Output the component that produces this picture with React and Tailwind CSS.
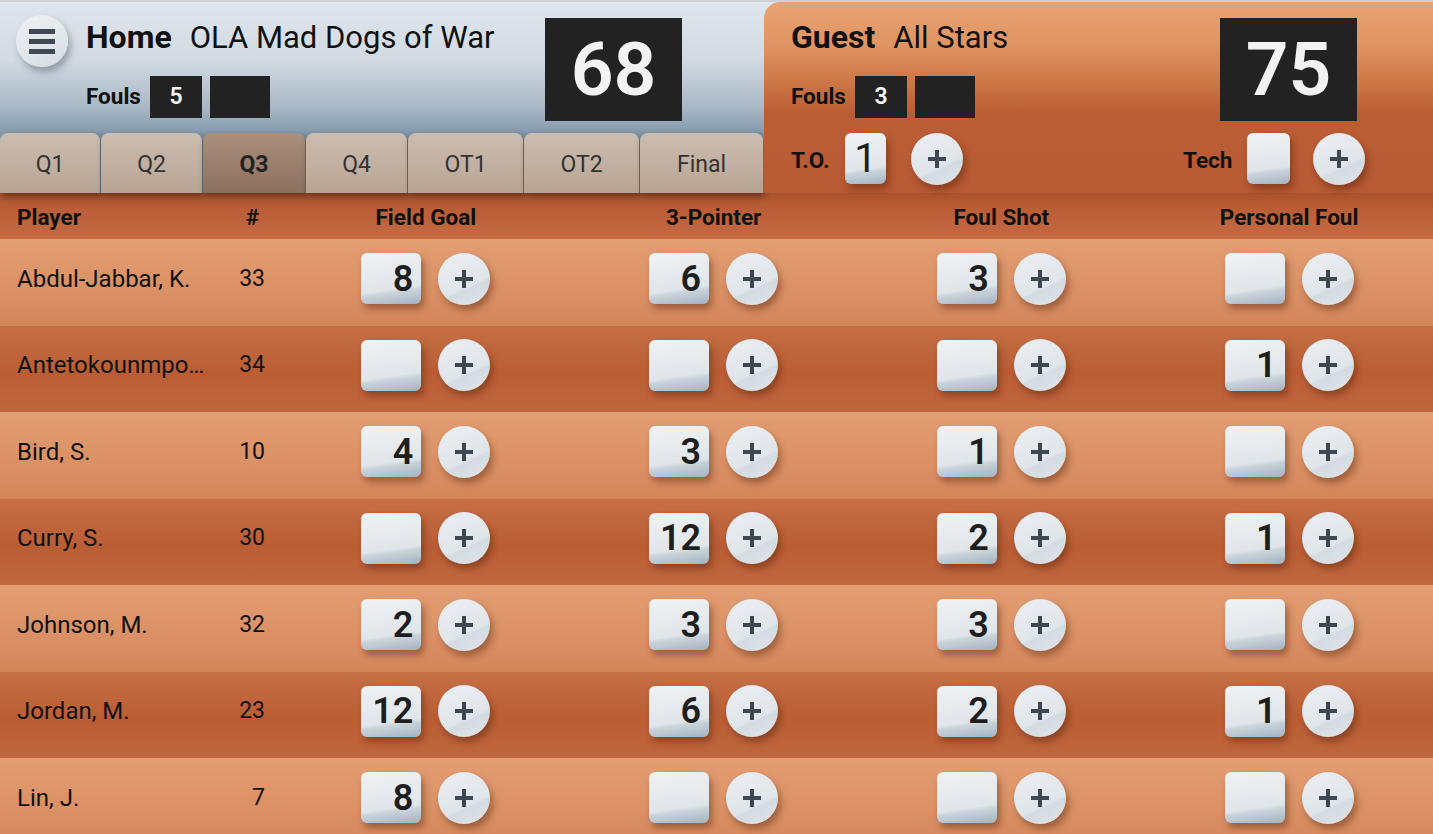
import React from "react";

const font = { fontFamily: "Roboto, 'Liberation Sans', sans-serif" };

const players = [
  { name: "Abdul-Jabbar, K.", num: 33, fg: 8, tp: 6, fs: 3, pf: "" },
  { name: "Antetokounmpo, G.", num: 34, fg: "", tp: "", fs: "", pf: 1 },
  { name: "Bird, S.", num: 10, fg: 4, tp: 3, fs: 1, pf: "" },
  { name: "Curry, S.", num: 30, fg: "", tp: 12, fs: 2, pf: 1 },
  { name: "Johnson, M.", num: 32, fg: 2, tp: 3, fs: 3, pf: "" },
  { name: "Jordan, M.", num: 23, fg: 12, tp: 6, fs: 2, pf: 1 },
  { name: "Lin, J.", num: 7, fg: 8, tp: "", fs: "", pf: "" },
];

const tabs = [
  { label: "Q1", w: "w-[100px]" },
  { label: "Q2", w: "w-[101px]" },
  { label: "Q3", w: "w-[102px]", active: true },
  { label: "Q4", w: "w-[101px]" },
  { label: "OT1", w: "w-[115px]" },
  { label: "OT2", w: "w-[115px]" },
  { label: "Final", w: "w-[123px]" },
];

const PlusButton = () => (
  <button className="w-[52px] h-[52px] rounded-full flex items-center justify-center bg-[linear-gradient(155deg,#eceff3_0%,#e0e5ea_62%,#d3dae1_66%,#e1e6eb_100%)] shadow-[3px_5px_7px_rgba(70,25,0,0.4)]">
    <svg width="18" height="18" viewBox="0 0 18 18">
      <rect x="7" y="0" width="4" height="18" fill="#3d4853" />
      <rect x="0" y="7" width="18" height="4" fill="#3d4853" />
    </svg>
  </button>
);

const NumberBox = ({ value, className = "w-[60px]", text = "text-[36px] font-semibold pr-[8px] justify-end" }) => (
  <div
    className={`${className} h-[51px] rounded-[6px] flex items-center ${text} text-[#1e1e1e] leading-none bg-[linear-gradient(172deg,#f0f2f4_0%,#e0e5ea_68%,#cad3db_74%,#a3b3c2_100%)] shadow-[3px_5px_7px_rgba(70,25,0,0.4)]`}
  >
    {value}
  </div>
);

const StatCell = ({ value }) => (
  <div className="flex items-center justify-center gap-[17px]">
    <NumberBox value={value} />
    <PlusButton />
  </div>
);

const DarkBox = ({ value, w }) => (
  <div className={`${w} h-[42px] bg-[#222222] text-[#f4f4f4] text-[23px] font-semibold flex items-center justify-center`}>
    {value}
  </div>
);

const ScoreBox = ({ value }) => (
  <div className="w-[137px] h-[103px] bg-[#222222] text-[#f2f2f2] text-[75px] font-semibold leading-none flex items-center justify-center">
    {value}
  </div>
);

const Fouls = ({ value }) => (
  <div className="flex items-center mt-[22px]">
    <span className="text-[22.5px] font-bold text-[#111] w-[64px]">Fouls</span>
    <DarkBox value={value} w="w-[52px]" />
    <div className="w-[8px]" />
    <DarkBox value="" w="w-[60px]" />
  </div>
);

export default function App() {
  return (
    <div className="w-[1433px] h-[834px] overflow-hidden bg-[#c46b44]" style={font}>
      {/* scoreboard header */}
      <div className="relative z-10 flex border-t-2 border-[#cdd1d5] bg-[linear-gradient(180deg,#dfe5ec_0%,#d2dae2_30%,#a9b8c6_55%,#7f96aa_70%,#7f96aa_100%)]">
        <div className="w-[764px] h-[191px] flex flex-col">
          <div className="h-[131px] flex">
            <div className="pl-[16px] pt-[13px]">
              <button className="w-[52px] h-[52px] rounded-full flex items-center justify-center bg-[linear-gradient(155deg,#eef1f4_0%,#e0e5ea_65%,#d2d9e0_100%)] shadow-[3px_5px_7px_rgba(40,50,60,0.35)]">
                <svg width="26" height="25" viewBox="0 0 26 25">
                  <rect x="0" y="0" width="26" height="5" fill="#404a55" />
                  <rect x="0" y="10" width="26" height="5" fill="#404a55" />
                  <rect x="0" y="20" width="26" height="5" fill="#404a55" />
                </svg>
              </button>
            </div>
            <div className="flex-1 flex justify-between pl-[18px] pr-[82px] pt-[16px]">
              <div className="flex flex-col">
                <div className="h-[34px] mt-[2px] flex items-center text-[#111] leading-none">
                  <span className="font-bold text-[32px]">Home</span>
                  <span className="ml-[18px] text-[31px]">OLA Mad Dogs of War</span>
                </div>
                <Fouls value="5" />
              </div>
              <ScoreBox value="68" />
            </div>
          </div>
          <div className="h-[60px] flex gap-[1px]">
            {tabs.map((t) => (
              <div
                key={t.label}
                className={`${t.w} h-full pt-[4px] rounded-t-[8px] flex items-center justify-center text-[23px] shadow-[2px_3px_6px_rgba(0,0,0,0.4)] ${
                  t.active
                    ? "font-bold text-[#222] bg-[linear-gradient(180deg,#a98f7c_0%,#977d69_60%,#8a705d_100%)]"
                    : "text-[#333] bg-[linear-gradient(180deg,#ccbdb0_0%,#c0ae9f_60%,#b7a392_100%)]"
                }`}
              >
                {t.label}
              </div>
            ))}
          </div>
        </div>

        <div className="flex-1 h-[191px] rounded-tl-[16px] pl-[27px] pt-[16px] flex flex-col bg-[linear-gradient(180deg,#e8a374_0%,#df9563_22%,#cd7746_42%,#bb5d34_58%,#b85a34_100%)]">
          <div className="flex justify-between h-[103px] pr-[76px]">
            <div className="flex flex-col">
              <div className="h-[34px] mt-[2px] flex items-center text-[#111] leading-none">
                <span className="font-bold text-[32px]">Guest</span>
                <span className="ml-[18px] text-[31px]">All Stars</span>
              </div>
              <Fouls value="3" />
            </div>
            <ScoreBox value="75" />
          </div>
          <div className="flex justify-between items-center h-[51px] mt-[12px] pr-[68px]">
            <div className="flex items-center">
              <span className="text-[22.5px] font-bold text-[#111] w-[54px] pt-[5px]">T.O.</span>
              <NumberBox value="1" className="w-[41px]" text="text-[40px] justify-center" />
              <div className="w-[25px]" />
              <PlusButton />
            </div>
            <div className="flex items-center">
              <span className="text-[22.5px] font-bold text-[#111] w-[64px] pt-[5px]">Tech</span>
              <NumberBox value="" className="w-[43px]" text="" />
              <div className="w-[23px]" />
              <PlusButton />
            </div>
          </div>
        </div>
      </div>

      {/* column headings */}
      <div className="h-[46px] pt-[3px] grid grid-cols-[210px_72px_1fr_1fr_1fr_1fr] items-center text-[22.5px] font-bold text-[#111] bg-[linear-gradient(180deg,#a9522d_0%,#bb5d36_35%,#c46b44_100%)]">
        <div className="pl-[17px]">Player</div>
        <div className="text-right pr-[23px]">#</div>
        <div className="text-center">Field Goal</div>
        <div className="text-center">3-Pointer</div>
        <div className="text-center">Foul Shot</div>
        <div className="text-center">Personal Foul</div>
      </div>

      {/* player rows */}
      {players.map((p, i) => (
        <div
          key={p.name}
          className={`h-[86.5px] pb-[7px] grid grid-cols-[210px_72px_1fr_1fr_1fr_1fr] items-center text-[#111] ${
            i % 2 === 0
              ? "bg-[linear-gradient(180deg,#e49e73_0%,#dc9267_50%,#d4865b_100%)]"
              : "bg-[linear-gradient(180deg,#c56f45_0%,#bb5d34_55%,#c0673f_100%)]"
          }`}
        >
          <div className="pl-[17px] pr-[4px] truncate text-[24px]">{p.name}</div>
          <div className="text-right pr-[17px] text-[23px]">{p.num}</div>
          <StatCell value={p.fg} />
          <StatCell value={p.tp} />
          <StatCell value={p.fs} />
          <StatCell value={p.pf} />
        </div>
      ))}
    </div>
  );
}
